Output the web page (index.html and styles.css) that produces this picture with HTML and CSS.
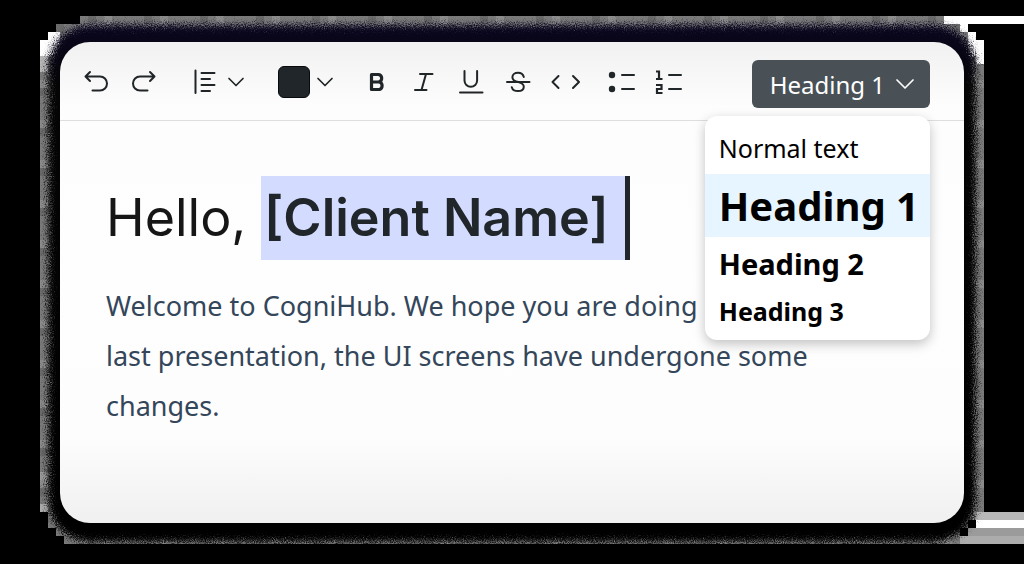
FILE: index.html
```html
<!DOCTYPE html>
<html lang="en">
<head>
<meta charset="utf-8">
<meta name="viewport" content="width=device-width, initial-scale=1">
<title>CogniHub editor</title>
<link rel="stylesheet" href="styles.css">
</head>
<body>
<svg class="backdrop" viewBox="0 0 1024 564" preserveAspectRatio="none" aria-hidden="true">
  <defs>
    <filter id="grain" x="0" y="0" width="1024" height="564" filterUnits="userSpaceOnUse" color-interpolation-filters="sRGB">
      <feGaussianBlur in="SourceGraphic" stdDeviation="3" result="soft"/>
      <feTurbulence type="fractalNoise" baseFrequency="0.9" numOctaves="2" seed="4" result="noise"/>
      <feDisplacementMap in="soft" in2="noise" scale="16" xChannelSelector="R" yChannelSelector="G"/>
    </filter>
    <linearGradient id="rim" x1="0" y1="0" x2="0" y2="1">
      <stop offset="0" stop-color="#0a0620"/>
      <stop offset="0.12" stop-color="#050505"/>
      <stop offset="1" stop-color="#000"/>
    </linearGradient>
    <pattern id="blocks" width="56" height="40" patternUnits="userSpaceOnUse">
      <path fill="#7b7b7b" d="M0 0h56v40H0z"/>
      <path fill="#6b6b6b" d="M8 0h8v8H8zM32 16h8v8h-8zM0 24h8v8H0zM40 8h8v8h-8z"/>
      <path fill="#8d8d8d" d="M24 0h8v8h-8zM48 16h8v8h-8zM16 32h8v8h-8zM40 0h8v8h-8z"/>
    </pattern>
  </defs>
  <path fill="url(#blocks)" d="M80 16H944V24H968V32H976V40H984V512H976V520H968V528H960V544H64V536H56V528H48V512H40V40H48V32H56V24H80Z"/>
  <path fill="#fff" d="M40 40h8v16h-8zM48 32h12v24H48zM944 16h80v8h-80zM960 24h8v8h-8zM968 32h8v24h-8zM976 40h8v24h-8zM976 520h48v8h-48z"/>
  <path fill="#b8b8b8" d="M40 56h8v16h-8zM976 512h48v8h-48z"/>
  <path fill="#9b9b9b" d="M968 528h56v8h-56zM40 472h8v8h-8z"/>
  <path fill="#acacac" d="M960 536h64v8h-64zM40 504h8v8h-8z"/>
  <rect x="48" y="25" width="928" height="517" rx="42" fill="url(#rim)" filter="url(#grain)"/>
</svg>

<main class="editor">
  <div class="toolbar" role="toolbar" aria-label="Formatting">
    <div class="group group-wide">
      <button class="tool" aria-label="Undo"><svg viewBox="0 0 32 32"><path d="M10 6 5.500 10.500 10 15M5.500 10.500H20a7 7 0 0 1 0 14h-7.500"/></svg></button>
      <button class="tool" aria-label="Redo"><svg viewBox="0 0 32 32"><path d="M23 6l4.500 4.500L23 15M27.500 10.500H13a7 7 0 0 0 0 14h7.500"/></svg></button>
    </div>
    <div class="group group-wide group-pair">
      <button class="tool" aria-label="Align"><svg viewBox="0 0 32 32"><path d="M6.500 4.500v22.500M12.500 7H25.500M12.500 13h8.500M12.500 19H25.500M12.500 25h8.500"/></svg></button>
      <button class="tool tool-narrow" aria-label="Alignment options"><svg viewBox="0 0 24 32"><path class="thin" d="m5 12.500 7 7 7-7"/></svg></button>
    </div>
    <div class="group group-pair">
      <button class="tool swatch" aria-label="Text color"></button>
      <button class="tool tool-narrow" aria-label="Color options"><svg viewBox="0 0 24 32"><path class="thin" d="m5 12.500 7 7 7-7"/></svg></button>
    </div>
    <div class="group">
      <button class="tool" aria-label="Bold"><svg viewBox="0 0 32 32"><path class="heavy" d="M10.500 8.500h7a3.800 3.800 0 0 1 0 7.500h-7M10.500 16h8a4 4 0 0 1 0 7.500h-8V8.500"/></svg></button>
      <button class="tool" aria-label="Italic"><svg viewBox="0 0 32 32"><path d="M12 8h12.500M7 24h11.500M18 8l-4.500 16"/></svg></button>
      <button class="tool" aria-label="Underline"><svg viewBox="0 0 32 32"><path d="M9.500 5v9.500a6.300 6.300 0 0 0 12.600 0V5M5 26.500h22.500"/></svg></button>
      <button class="tool" aria-label="Strikethrough"><svg viewBox="0 0 32 32"><path d="M5 16h22.500M21.800 11c-.8-3-3-4.200-5.800-4.200-3.300 0-5.600 1.800-5.600 4.400 0 3.300 3 4.300 6 4.900 3.200.8 5.400 2 5.400 4.600 0 2.800-2.400 4.400-5.800 4.400-3 0-5.500-1.400-6.200-3.900"/></svg></button>
      <button class="tool" aria-label="Code"><svg viewBox="0 0 32 32"><path d="m9.500 10-6 6 6 6M24 10l6 6-6 6"/></svg></button>
    </div>
    <div class="group">
      <button class="tool" aria-label="Bulleted list"><svg viewBox="0 0 32 32"><circle class="dot" cx="7" cy="9" r="3.200"/><circle class="dot" cx="7" cy="23" r="3.200"/><path d="M17 9h12M17 23h12"/></svg></button>
      <button class="tool" aria-label="Numbered list"><svg viewBox="0 0 32 32"><path d="M17 9h12M17 23h12"/><path class="digit" d="M4 5.500h3v8M4 13h6.500M4 19h5.500v4H5v4h5.500"/></svg></button>
    </div>
    <div class="style-picker">
      <button class="style-button" aria-haspopup="listbox" aria-expanded="true">Heading 1<svg viewBox="0 0 20 20" aria-hidden="true"><path d="m2 6 8 8 8-8"/></svg></button>
      <div class="menu" role="listbox" aria-label="Text style">
        <button class="option option-normal" role="option">Normal text</button>
        <button class="option option-h1" role="option" aria-selected="true">Heading 1</button>
        <button class="option option-h2" role="option">Heading 2</button>
        <button class="option option-h3" role="option">Heading 3</button>
      </div>
    </div>
  </div>
  <article class="document">
    <h1 class="title">Hello, <mark class="selection">[Client Name]</mark></h1>
    <p class="text">Welcome to CogniHub. We hope you are doing<br>last presentation, the UI screens have undergone some<br>changes.</p>
  </article>
</main>
</body>
</html>
```
FILE: styles.css
```css
* {
  box-sizing: border-box;
}

body {
  margin: 0;
  min-height: 100vh;
  padding: 42px 60px 41px;
  display: flex;
  background: #000;
  font-family: "Noto Sans", sans-serif;
}

button {
  margin: 0;
  padding: 0;
  border: 0;
  background: none;
  color: inherit;
  font: inherit;
  cursor: pointer;
}

.backdrop {
  position: absolute;
  inset: 0;
  width: 100%;
  height: 100%;
}

.editor {
  position: relative;
  flex: 1;
  border-radius: 30px;
  background: linear-gradient(#f1f1f1 0, #fdfdfd 64px, #fefefe 50%, #fdfdfd 82%, #f0f0f0 100%);
}

.toolbar {
  display: flex;
  align-items: flex-start;
  gap: 24px;
  padding: 18px 34px 12px 20px;
  border-bottom: 1px solid #dedede;
}

.group {
  display: flex;
  align-items: center;
  gap: 15px;
  height: 44px;
}

.group-pair {
  gap: 3px;
}

.group-wide {
  padding-right: 6px;
}

.tool {
  width: 32px;
  height: 32px;
}

.tool-narrow {
  width: 24px;
}

.tool svg {
  display: block;
  width: 100%;
  height: 100%;
}

.tool path,
.style-button path {
  fill: none;
  stroke: #202527;
  stroke-width: 2;
  stroke-linecap: round;
  stroke-linejoin: round;
}

.tool .thin {
  stroke-width: 1.7;
}

.tool .heavy {
  stroke-width: 3.2;
}

.tool .digit {
  stroke-width: 2.2;
  stroke-linecap: butt;
  stroke-linejoin: miter;
}

.dot {
  fill: #202527;
}

.swatch {
  border: 1px solid #080a0b;
  border-radius: 6px;
  background: #202629;
}

.style-picker {
  position: relative;
  margin-left: auto;
}

.style-button {
  display: flex;
  align-items: center;
  gap: 10px;
  height: 48px;
  padding: 0 15px 0 18px;
  border-radius: 6px;
  background: #495157;
  color: #fff;
  font-size: 24px;
  white-space: nowrap;
}

.style-button svg {
  width: 20px;
  height: 20px;
}

.style-button path {
  stroke: #fff;
  stroke-width: 1.7;
}

.menu {
  position: absolute;
  z-index: 1;
  top: 56px;
  right: 0;
  display: flex;
  flex-direction: column;
  padding: 8px 0;
  border-radius: 12px;
  background: #fff;
  box-shadow: 0 4px 12px rgba(0, 0, 0, 0.24);
  color: #000;
}

.option {
  padding: 0 11px 0 14px;
  text-align: left;
  white-space: nowrap;
}

.option-normal {
  height: 50px;
  padding-bottom: 2px;
  font-size: 25px;
}

.option-h1 {
  height: 63px;
  background: #e6f5ff;
  font-size: 40px;
  font-weight: 700;
}

.option-h2 {
  height: 53px;
  font-size: 29px;
  font-weight: 700;
}

.option-h3 {
  height: 42px;
  font-size: 25px;
  font-weight: 700;
}

.document {
  padding: 55px 46px 40px;
}

.title {
  margin: 0;
  color: #161616;
  font: 400 52px/84px Inter, sans-serif;
  white-space: nowrap;
}

.selection {
  display: inline-block;
  padding: 0 16px 0 3px;
  border-right: 5px solid #202629;
  background: #d3dcff;
  color: #202629;
  font-weight: 600;
}

.text {
  margin: 21px 0 0;
  color: #34465a;
  font: 400 27px/50px "Noto Sans", sans-serif;
}
```
